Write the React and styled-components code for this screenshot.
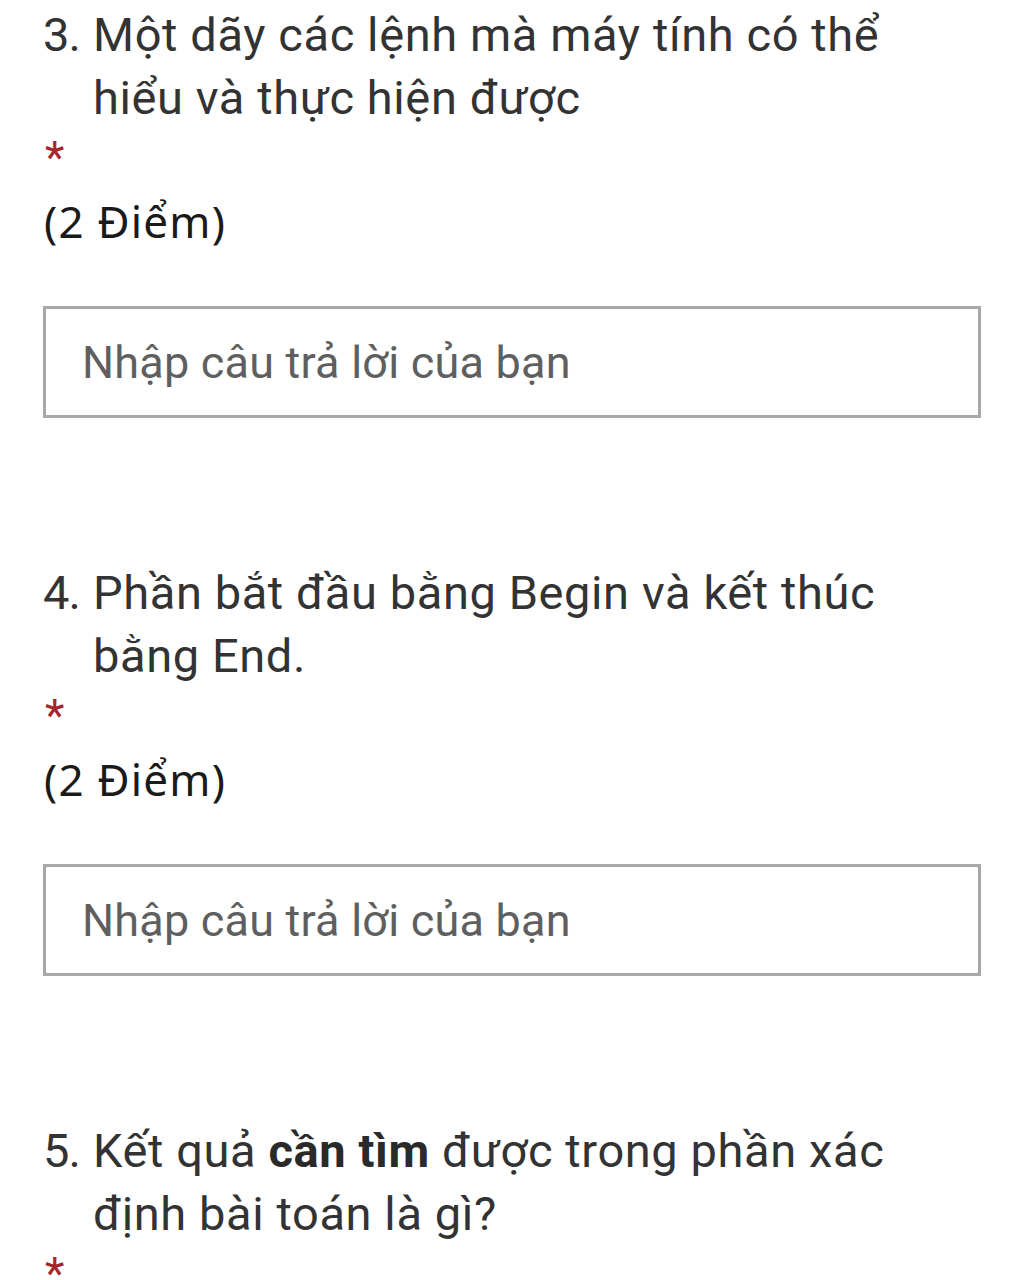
import React from 'react';
import styled, { createGlobalStyle } from 'styled-components';

const GlobalStyle = createGlobalStyle`
  html, body {
    margin: 0;
    padding: 0;
    background: #ffffff;
  }
  body {
    font-family: Roboto, "Noto Sans", Arial, sans-serif;
    -webkit-font-smoothing: antialiased;
  }
`;

const Page = styled.div`
  width: 1024px;
  padding: 3px 43px 0 43px;
  box-sizing: border-box;
  display: flex;
  flex-direction: column;
  gap: 143px;
`;

const Question = styled.section`
  display: flex;
  flex-direction: column;
`;

const Title = styled.div`
  display: flex;
  font-size: 47px;
  line-height: 63px;
  color: #333333;
  letter-spacing: 0.6px;
`;

const Num = styled.span`
  flex: 0 0 50px;
  letter-spacing: -1px;
`;

const TitleText = styled.span`
  flex: 1;

  b {
    font-weight: 700;
    color: #2a2a2a;
  }
`;

const Star = styled.div`
  font-size: 45px;
  line-height: 44px;
  height: 45px;
  color: #a4262c;
  padding-left: 2px;
  padding-top: 7px;
  box-sizing: border-box;
`;

const Points = styled.div`
  margin-top: 16px;
  font-family: "Noto Sans", Roboto, sans-serif;
  font-size: 44px;
  line-height: 63px;
  letter-spacing: 1.2px;
  color: #1a1a1a;
  padding-left: 1px;
`;

const AnswerBox = styled.div`
  margin-top: 53px;
  height: 112px;
  box-sizing: border-box;
  border: 3px solid #a8a8a8;
  display: flex;
  align-items: center;
  padding-left: 36px;
  font-size: 45px;
  letter-spacing: 0.2px;
  color: #5f5f5f;
`;

const questions = [
  {
    num: '3.',
    lines: ['Một dãy các lệnh mà máy tính có thể', 'hiểu và thực hiện được'],
  },
  {
    num: '4.',
    lines: ['Phần bắt đầu bằng Begin và kết thúc', 'bằng End.'],
  },
  {
    num: '5.',
    lines: [
      <>
        Kết quả <b>cần tìm</b> được trong phần xác
      </>,
      'định bài toán là gì?',
    ],
  },
];

const App = () => {
  return (
    <>
      <GlobalStyle />
      <Page>
        {questions.map((q) => (
          <Question key={q.num}>
            <Title>
              <Num>{q.num}</Num>
              <TitleText>
                {q.lines[0]}
                <br />
                {q.lines[1]}
              </TitleText>
            </Title>
            <Star>*</Star>
            <Points>(2 Điểm)</Points>
            <AnswerBox>Nhập câu trả lời của bạn</AnswerBox>
          </Question>
        ))}
      </Page>
    </>
  );
};

export default App;
